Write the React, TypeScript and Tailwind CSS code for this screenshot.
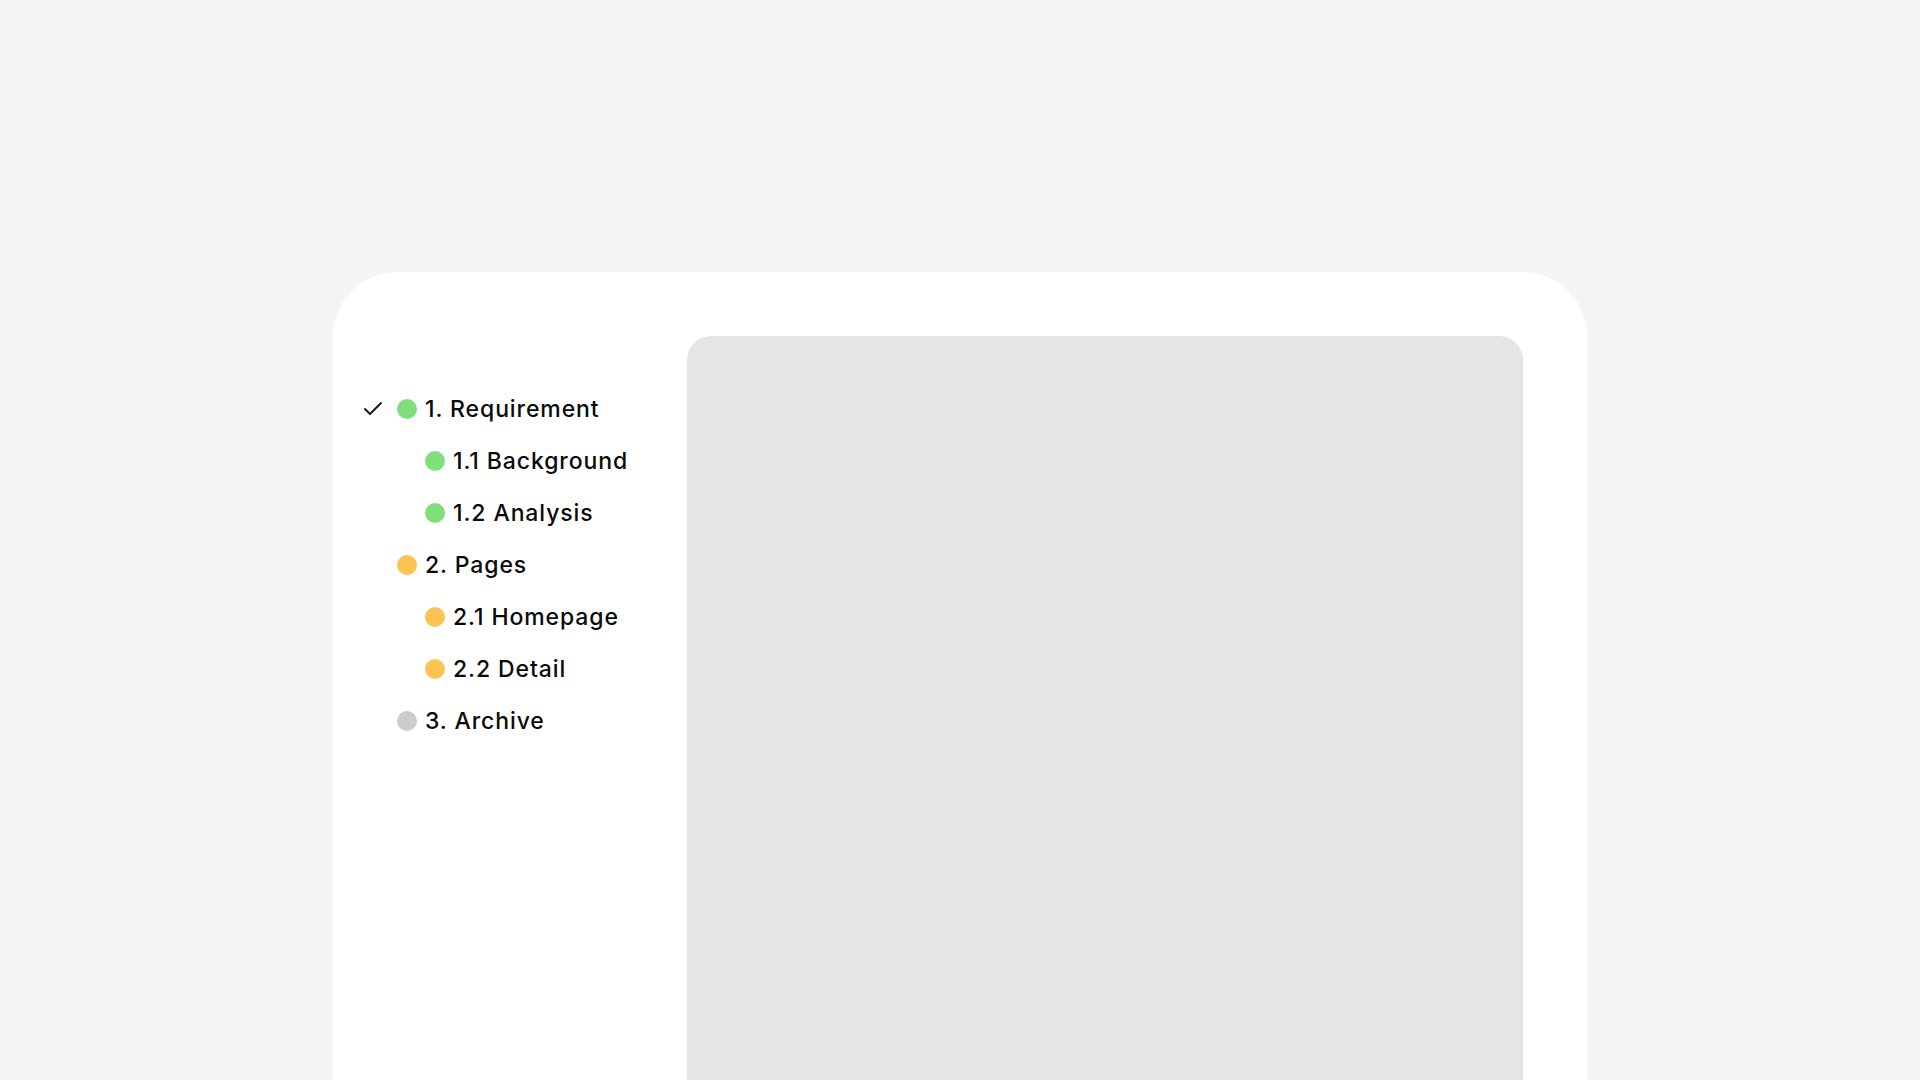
import React from "react";

type Item = { label: string; level: number; color: string; check?: boolean };

const items: Item[] = [
  { label: "1. Requirement", level: 0, color: "bg-[#80df7b]", check: true },
  { label: "1.1 Background", level: 1, color: "bg-[#80df7b]" },
  { label: "1.2 Analysis", level: 1, color: "bg-[#80df7b]" },
  { label: "2. Pages", level: 0, color: "bg-[#ffc352]" },
  { label: "2.1 Homepage", level: 1, color: "bg-[#ffc352]" },
  { label: "2.2 Detail", level: 1, color: "bg-[#ffc352]" },
  { label: "3. Archive", level: 0, color: "bg-[#cccccc]" },
];

export default function App() {
  return (
    <div className="w-[1920px] h-[1080px] overflow-hidden bg-[#f4f4f4] pt-[272px] pl-[333px]" style={{ fontFamily: "Inter, 'Noto Sans', sans-serif" }}>
      <div className="w-[1254px] h-[900px] bg-white rounded-[64px] flex pt-[64px] pl-[28px]">
        <div className="w-[326px] pt-[47px] flex flex-col">
          {items.map((it) => (
            <div key={it.label} className="h-[52px] flex items-center">
              <div className="w-[36px] flex items-center shrink-0">
                {it.check && (
                  <svg width="24" height="24" viewBox="0 0 24 24" fill="none" stroke="#111" strokeWidth="1.8" strokeLinecap="round" strokeLinejoin="round">
                    <path d="M20 6 9 17l-5-5" />
                  </svg>
                )}
              </div>
              {it.level === 1 && <div className="w-[28px] shrink-0" />}
              <div className={`w-[20px] h-[20px] rounded-full shrink-0 ${it.color}`} />
              <span className="ml-[8px] text-[23px] font-medium text-[#0a0a0a] tracking-[0.9px] whitespace-nowrap">{it.label}</span>
            </div>
          ))}
        </div>
        <div className="w-[836px] h-[900px] bg-[#e5e5e5] rounded-[24px]" />
      </div>
    </div>
  );
}
